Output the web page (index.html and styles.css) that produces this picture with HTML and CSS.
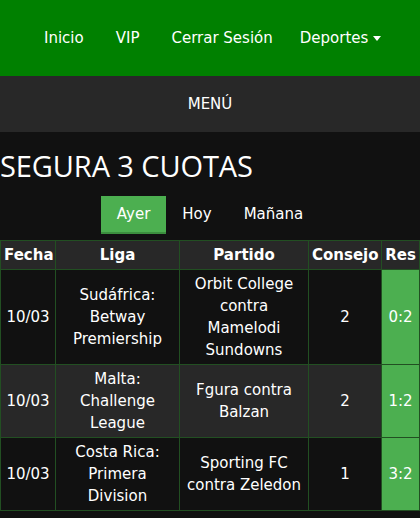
FILE: index.html
```html
<!DOCTYPE html>
<html lang="es">
<head>
<meta charset="utf-8">
<title>Segura 3 cuotas</title>
<link rel="stylesheet" href="styles.css">
</head>
<body>
<nav class="topnav">
  <a class="nav-link" href="#">Inicio</a>
  <a class="nav-link" href="#">VIP</a>
  <a class="nav-link" href="#">Cerrar Sesión</a>
  <a class="nav-link nav-drop" href="#">Deportes <svg class="caret" width="8" height="5" viewBox="0 0 8 5"><polygon points="0,0 8,0 4,5" fill="#fff"/></svg></a>
</nav>
<div class="menubar">MENÚ</div>
<main class="content">
  <h2 class="title">SEGURA 3 CUOTAS</h2>
  <div class="tabs">
    <a class="tab active" href="#">Ayer</a>
    <a class="tab" href="#">Hoy</a>
    <a class="tab" href="#">Mañana</a>
  </div>
  <table class="tips">
    <thead>
      <tr>
        <th class="c-date">Fecha</th>
        <th class="c-league">Liga</th>
        <th class="c-match">Partido</th>
        <th class="c-tip">Consejo</th>
        <th class="c-res">Res</th>
      </tr>
    </thead>
    <tbody>
      <tr>
        <td>10/03</td>
        <td>Sudáfrica: Betway Premiership</td>
        <td>Orbit College contra Mamelodi Sundowns</td>
        <td>2</td>
        <td class="res">0:2</td>
      </tr>
      <tr>
        <td>10/03</td>
        <td>Malta: Challenge League</td>
        <td>Fgura contra Balzan</td>
        <td>2</td>
        <td class="res">1:2</td>
      </tr>
      <tr>
        <td>10/03</td>
        <td>Costa Rica: Primera Division</td>
        <td>Sporting FC contra Zeledon</td>
        <td>1</td>
        <td class="res">3:2</td>
      </tr>
    </tbody>
  </table>
</main>
</body>
</html>
```
FILE: styles.css
```css
html, body {
  margin: 0;
  padding: 0;
  background: #111111;
  overflow: hidden;
}
body {
  font-family: "DejaVu Sans", Verdana, sans-serif;
  font-size: 15px;
  color: #ffffff;
}
a {
  color: #ffffff;
  text-decoration: none;
}
.topnav {
  height: 76px;
  background: #008000;
  display: flex;
  align-items: center;
  padding-left: 28px;
}
.nav-link {
  padding: 0 16px;
  line-height: 22px;
}
.nav-drop {
  padding-left: 11px;
  display: flex;
  align-items: center;
  gap: 5px;
}
.caret {
  display: block;
}
.menubar {
  height: 56px;
  background: #282828;
  display: flex;
  align-items: center;
  justify-content: center;
}
.content {
  background: #111111;
}
.title {
  margin: 0;
  padding-top: 14px;
  font-family: "Open Sans", "Noto Sans", sans-serif;
  font-weight: 400;
  font-size: 29px;
  line-height: 40px;
  letter-spacing: -0.1px;
}
.tabs {
  display: flex;
  justify-content: center;
  margin-top: 10px;
}
.tab {
  padding: 7px 16px;
  line-height: 22px;
  border-bottom: 2px solid transparent;
}
.tab.active {
  background: #4caf50;
  border-bottom-color: #3b8e3e;
}
.tips {
  margin-top: 6px;
  width: 100%;
  table-layout: fixed;
  border-collapse: collapse;
  text-align: center;
  line-height: 22px;
}
.tips th,
.tips td {
  border: 1px solid #224f22;
  padding: 3px;
  overflow: hidden;
}
.tips thead tr {
  background: #282828;
}
.tips tbody tr:nth-child(even) {
  background: #282828;
}
.c-date { width: 48px; }
.c-league { width: 117px; }
.c-match { width: 122px; }
.c-tip { width: 66px; }
.tips td.res {
  background: #4caf50;
}
```
